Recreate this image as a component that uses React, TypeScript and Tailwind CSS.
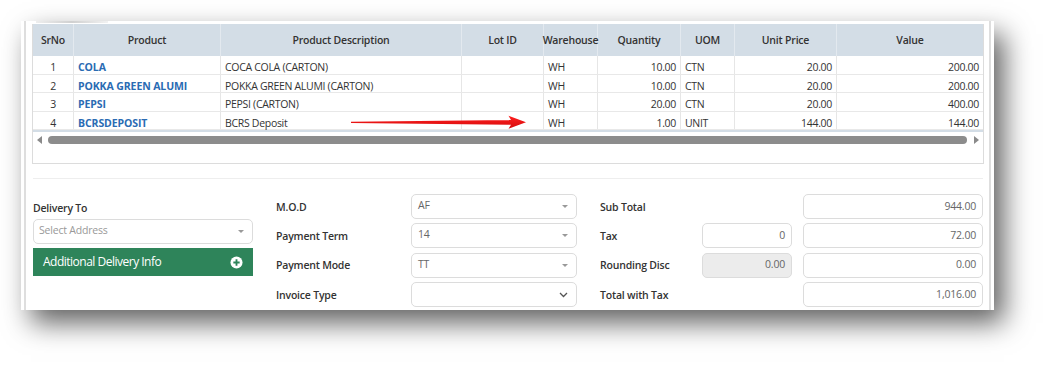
import React from "react";

const cols = [41, 147, 241, 82, 54, 83, 54, 102, 146];
const heads = ["SrNo", "Product", "Product Description", "Lot ID", "Warehouse", "Quantity", "UOM", "Unit Price", "Value"];
const rows = [
  ["1", "COLA", "COCA COLA (CARTON)", "", "WH", "10.00", "CTN", "20.00", "200.00"],
  ["2", "POKKA GREEN ALUMI", "POKKA GREEN ALUMI (CARTON)", "", "WH", "10.00", "CTN", "20.00", "200.00"],
  ["3", "PEPSI", "PEPSI (CARTON)", "", "WH", "20.00", "CTN", "20.00", "400.00"],
  ["4", "BCRSDEPOSIT", "BCRS Deposit", "", "WH", "1.00", "UNIT", "144.00", "144.00"],
];
const align = ["center", "left", "left", "left", "left", "right", "left", "right", "right"];

function Caret() {
  return <span className="w-0 h-0 border-x-[3px] border-x-transparent border-t-[3px] border-t-[#999]" />;
}

function Select({ value, chevron }: { value: string; chevron?: boolean }) {
  return (
    <div className="w-[166px] h-[25px] border border-[#dcdcdc] rounded-[5px] bg-white flex items-start justify-between pl-[6px] pr-[8px] pt-[3px]">
      <span className="text-[10.5px] tracking-[-0.2px] text-[#666] leading-[14px]">{value}</span>
      {chevron ? (
        <svg width="9" height="6" viewBox="0 0 9 6" className="mt-[6px]">
          <path d="M1 1 L4.5 4.5 L8 1" fill="none" stroke="#555" strokeWidth="1.3" />
        </svg>
      ) : (
        <span className="mt-[7px] flex"><Caret /></span>
      )}
    </div>
  );
}

function Num({ value, w, disabled }: { value: string; w: number; disabled?: boolean }) {
  return (
    <div
      className={`h-[25px] border border-[#dcdcdc] rounded-[5px] flex items-center justify-end pr-[6px] text-[10.5px] tracking-[-0.2px] text-[#666] ${disabled ? "bg-[#ececec]" : "bg-white"}`}
      style={{ width: w }}
    >
      {value}
    </div>
  );
}

export default function App() {
  return (
    <div className="w-[1050px] h-[367px] bg-white overflow-hidden relative" style={{ fontFamily: '"Open Sans", "Noto Sans", sans-serif' }}>
      <div className="absolute left-[21px] top-[21px] w-[973px] h-[289px] bg-white shadow-[10px_13px_26px_rgba(0,0,0,0.62)] overflow-hidden">
        <div className="h-full mx-[3px] border-x-2 border-[#dedede] pl-[6px] pr-[5px] text-[#333]">
          <div className="h-[3px] flex items-start">
            <div className="h-[1.5px] w-[72px] ml-[4px] bg-gradient-to-r from-[#eeeeee] via-[#d0d0d0] to-[#f2f2f2]" />
          </div>
          {/* table wrapper */}
          <div className="w-[952px] border border-[#dcdcdc] border-t-0">
            <div className="flex h-[32px] bg-[#d3dde6]">
              {heads.map((h, i) => (
                <div
                  key={h}
                  className="flex items-center justify-center pt-[2px] text-[10.5px] tracking-[-0.2px] font-semibold text-[#333] border-r border-[#e3e9ef] last:border-r-0"
                  style={{ width: cols[i] }}
                >
                  {h}
                </div>
              ))}
            </div>
            {rows.map((r, ri) => (
              <div key={ri} className="flex h-[18.5px] border-b border-[#e8e8e8]">
                {r.map((c, i) => (
                  <div
                    key={i}
                    className={`flex items-start pt-[4px] leading-[14px] text-[10.5px] px-[4px] border-r border-[#e6e6e6] last:border-r-0 whitespace-nowrap ${
                      align[i] === "center" ? "justify-center" : align[i] === "right" ? "justify-end" : "justify-start"
                    } ${i === 1 ? "font-bold text-[#2a6bb3] tracking-[-0.1px]" : "text-[#333] tracking-[-0.3px]"}`}
                    style={{ width: cols[i] }}
                  >
                    {c}
                  </div>
                ))}
              </div>
            ))}
            <div className="h-[2px] bg-[#d3dde6]" />
            <div className="h-[15px] flex items-center px-[4px]">
              <span className="w-0 h-0 border-y-[4px] border-y-transparent border-r-[5px] border-r-[#8a8a8a]" />
              <div className="ml-[6px] w-[919px] h-[8px] rounded-full bg-[#8c8c8c]" />
              <span className="ml-[7px] w-0 h-0 border-y-[4px] border-y-transparent border-l-[5px] border-l-[#8a8a8a]" />
            </div>
            <div className="h-[16px]" />
          </div>
          <div className="mt-[14px] ml-[1px] h-[1px] w-[950px] bg-[#eeeeee]" />
          {/* form */}
          <div className="mt-[15px] ml-[1px] flex">
            <div className="w-[220px] flex flex-col">
              <div className="mt-[7px] h-[14px] text-[10.5px] tracking-[-0.2px] font-semibold leading-[14px]">Delivery To</div>
              <div className="mt-[4px] h-[25px] border border-[#dcdcdc] rounded-[5px] flex items-start justify-between pl-[5px] pr-[8px] pt-[3px]">
                <span className="text-[10.5px] tracking-[-0.2px] text-[#999] leading-[14px]">Select Address</span>
                <span className="mt-[7px] flex"><Caret /></span>
              </div>
              <div className="mt-[4px] h-[28px] bg-[#2e845a] flex items-center justify-between pl-[10px] pr-[10px]">
                <span className="text-white text-[12px] tracking-[-0.5px]">Additional Delivery Info</span>
                <svg width="13" height="13" viewBox="0 0 14 14">
                  <circle cx="7" cy="7" r="6.5" fill="white" />
                  <path d="M7 3.6 V10.4 M3.6 7 H10.4" stroke="#2e845a" strokeWidth="2" />
                </svg>
              </div>
            </div>
            <div className="ml-[23px] flex flex-col gap-[4.3px]">
              {[["M.O.D", "AF"], ["Payment Term", "14"], ["Payment Mode", "TT"], ["Invoice Type", ""]].map(([l, v], i) => (
                <div key={l} className="flex items-center h-[25px]">
                  <div className="w-[135px] pt-[2px] text-[10.5px] tracking-[-0.2px] font-semibold">{l}</div>
                  <Select value={v} chevron={i === 3} />
                </div>
              ))}
            </div>
            <div className="ml-[23px] flex flex-col gap-[4.3px]">
              {[
                ["Sub Total", null, "944.00"],
                ["Tax", "0", "72.00"],
                ["Rounding Disc", "0.00", "0.00"],
                ["Total with Tax", null, "1,016.00"],
              ].map(([l, s, b], i) => (
                <div key={l as string} className="flex items-center h-[25px]">
                  <div className="w-[102px] pt-[2px] text-[10.5px] tracking-[-0.2px] font-semibold">{l}</div>
                  <div className="w-[90px]">{s !== null && <Num value={s as string} w={90} disabled={i === 2} />}</div>
                  <div className="ml-[11px]"><Num value={b as string} w={180} /></div>
                </div>
              ))}
            </div>
          </div>
        </div>
      </div>
      <svg className="absolute left-[350px] top-[114px]" width="180" height="17" viewBox="0 0 180 17">
        <defs>
          <linearGradient id="rg" x1="0" y1="0" x2="0" y2="1">
            <stop offset="0" stopColor="#ff2020" />
            <stop offset="1" stopColor="#d40a0a" />
          </linearGradient>
        </defs>
        <polygon points="1,7.8 161,6 158.5,1.8 176,8.3 158.5,14.8 161,10.8 1,8.9" fill="url(#rg)" />
      </svg>
    </div>
  );
}
